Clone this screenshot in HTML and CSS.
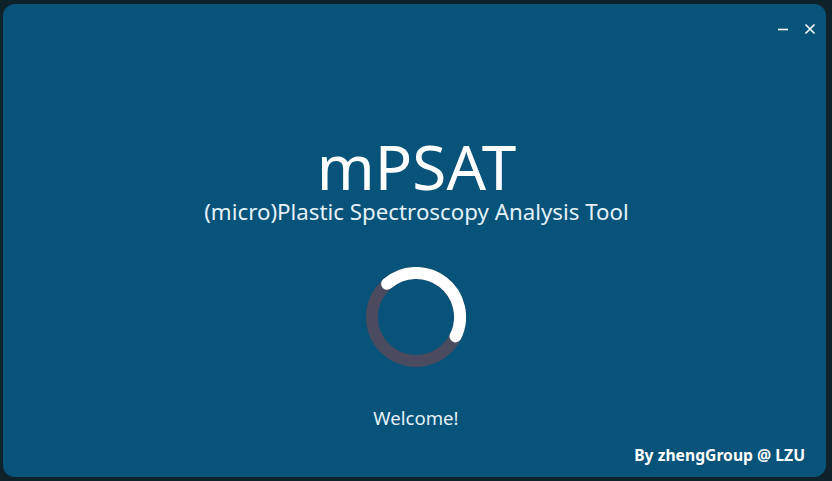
FILE: index.html
```html
<!DOCTYPE html>
<html>
<head>
<meta charset="utf-8">
<link rel="stylesheet" href="styles.css">
</head>
<body>
<div class="window">
  <div class="titlebar">
    <span class="ctl ctl-min"><svg width="12" height="12" viewBox="0 0 12 12"><path d="M1 6.5H11" stroke="#fff" stroke-width="1.6"/></svg></span>
    <span class="ctl ctl-close"><svg width="12" height="12" viewBox="0 0 12 12"><path d="M1.5 1.5L10.5 10.5M10.5 1.5L1.5 10.5" stroke="#fff" stroke-width="1.6"/></svg></span>
  </div>
  <div class="content">
    <div class="title">mPSAT</div>
    <div class="subtitle">(micro)Plastic Spectroscopy Analysis Tool</div>
    <div class="spinner">
      <svg width="100" height="100" viewBox="0 0 100 100">
        <circle cx="50" cy="50" r="44" fill="none" stroke="#4a4b5e" stroke-width="12"/>
        <path d="M21.1 16.8 A44 44 0 0 1 89.5 69.4" fill="none" stroke="#fff" stroke-width="12" stroke-linecap="round"/>
      </svg>
    </div>
    <div class="welcome">Welcome!</div>
  </div>
  <div class="footer">By zhengGroup @ LZU</div>
</div>
</body>
</html>
```
FILE: styles.css
```css
html, body {
  margin: 0;
  padding: 0;
  background: #0f2229;
  width: 832px;
  height: 481px;
  overflow: hidden;
}
body {
  padding: 4px 6px 4px 3px;
  box-sizing: border-box;
}
.window {
  height: 473px;
  background: #07537a;
  border-radius: 12px;
  display: flex;
  flex-direction: column;
  color: #fff;
  font-family: "Noto Sans", "Open Sans", sans-serif;
}
.titlebar {
  display: flex;
  justify-content: flex-end;
  gap: 15px;
  padding: 19px 10px 0 0;
  height: 14px;
}
.ctl {
  display: flex;
  width: 12px;
  height: 12px;
}
.content {
  display: flex;
  flex-direction: column;
  align-items: center;
  padding-top: 99px;
}
.title {
  font-size: 62px;
  line-height: 60px;
  height: 60px;
  margin-left: 4px;
}
.subtitle {
  font-size: 22.3px;
  line-height: 26px;
  margin-top: 3px;
  margin-left: 4px;
  color: #e4f1f8;
}
.spinner {
  margin-top: 42px;
  margin-left: 3px;
  width: 100px;
  height: 100px;
}
.spinner svg { display: block; }
.welcome {
  font-size: 18.6px;
  line-height: 24px;
  margin-top: 39px;
  margin-left: 3px;
  color: #e4f1f8;
}
.footer {
  margin-top: auto;
  align-self: flex-end;
  font-weight: bold;
  font-size: 15.7px;
  line-height: 20px;
  padding: 0 21px 12px 0;
}
```
